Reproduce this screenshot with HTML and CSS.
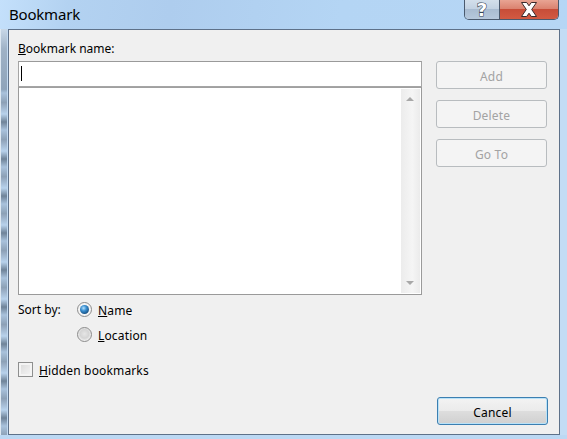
FILE: index.html
```html
<!DOCTYPE html>
<html>
<head>
<meta charset="utf-8">
<title>Bookmark</title>
<link rel="stylesheet" href="styles.css">
</head>
<body>
<div class="window">
  <div class="titlebar">
    <span class="title">Bookmark</span>
    <div class="caption-buttons">
      <div class="cap-btn help"><span class="help-glyph">?</span></div>
      <div class="cap-btn close">
        <svg width="22" height="15" viewBox="0 0 22 15">
          <path d="M3.5 0.5 H8.7 L11 3.8 L13.3 0.5 H18.5 L13.7 7.5 L18.5 14.5 H13.3 L11 11.2 L8.7 14.5 H3.5 L8.3 7.5 Z" fill="#ffffff" stroke="#3a2a2a" stroke-width="1"/>
        </svg>
      </div>
    </div>
  </div>
  <div class="middle">
    <div class="frame-left"></div>
    <div class="client">
      <div class="main">
        <div class="left-col">
          <label class="field-label"><u>B</u>ookmark name:</label>
          <div class="name-input"><span class="caret"></span></div>
          <div class="listbox">
            <div class="list-items"></div>
            <div class="scrollbar">
              <span class="arrow up"></span>
              <span class="arrow down"></span>
            </div>
          </div>
          <div class="sort">
            <span class="sort-label">Sort by:</span>
            <div class="radios">
              <div class="radio-row"><span class="radio checked"><span class="dot"></span></span><span class="opt-text"><u>N</u>ame</span></div>
              <div class="radio-row"><span class="radio"></span><span class="opt-text"><u>L</u>ocation</span></div>
            </div>
          </div>
          <div class="check-row"><span class="checkbox"></span><span class="opt-text"><u>H</u>idden bookmarks</span></div>
        </div>
        <div class="right-col">
          <div class="btn disabled">Add</div>
          <div class="btn disabled">Delete</div>
          <div class="btn disabled">Go To</div>
        </div>
      </div>
      <div class="footer">
        <div class="btn default">Cancel</div>
      </div>
    </div>
    <div class="frame-right"></div>
  </div>
</div>
</body>
</html>
```

FILE: styles.css
```css
html, body {
  margin: 0;
  padding: 0;
}
body {
  width: 567px;
  height: 439px;
  overflow: hidden;
  background: #bcd8f3;
  font-family: "Noto Sans", "Open Sans", "DejaVu Sans", sans-serif;
  font-size: 12px;
  color: #000;
}
.window {
  display: flex;
  flex-direction: column;
  width: 567px;
  height: 439px;
}
.titlebar {
  height: 29px;
  display: flex;
  align-items: flex-start;
  background: linear-gradient(100deg, #c4e0fb 0%, #b3d2f1 12%, #aecdee 30%, #b4d5f4 60%, #b6d6f5 100%);
}
.title {
  font-size: 15px;
  line-height: 15px;
  margin: 7px 0 0 9px;
  color: #000;
  letter-spacing: -0.2px;
}
.caption-buttons {
  margin-left: auto;
  margin-right: 8px;
  display: flex;
  height: 20px;
  border: 1px solid #4a5a6e;
  border-top: none;
  border-radius: 0 0 5px 5px;
  overflow: hidden;
  box-sizing: border-box;
}
.cap-btn {
  height: 19px;
  display: flex;
  align-items: center;
  justify-content: center;
}
.help {
  width: 34px;
  background: linear-gradient(#d3dfeb 0%, #c3d2e2 45%, #a9bcd1 50%, #b6c8dc 100%);
  border-right: 1px solid #4a5a6e;
}
.help-glyph {
  font-family: "DejaVu Sans", sans-serif;
  font-weight: bold;
  font-size: 18px;
  line-height: 18px;
  color: #fff;
  -webkit-text-stroke: 1.2px #3a4656;
  paint-order: stroke fill;
  margin-top: 1px;
}
.close {
  width: 58px;
  background: linear-gradient(#e8a493 0%, #db8370 45%, #c74d38 50%, #d25a42 100%);
}
.middle {
  display: flex;
  height: 406px;
}
.frame-left {
  width: 8px;
  background:
    linear-gradient(90deg, #dde8f2 0, #dde8f2 1px, transparent 1px, transparent 7px, #c2daf2 7px),
    linear-gradient(180deg, #c8d8e8 0px, #9fb2c6 20px, #8fa4ba 60px, transparent 61px),
    repeating-linear-gradient(180deg, #8fa2b8 0px, #b8d2ec 11px, #6f8398 19px, #a9c2dc 27px, #8b9fb4 37px);
}
.client {
  width: 552px;
  box-sizing: border-box;
  border: 1px solid #5e7189;
  background: #f0f0f0;
  padding: 11px 11px 9px 9px;
  display: flex;
  flex-direction: column;
}
.frame-right {
  flex: 1;
  background: #c3dcf4;
}
.main {
  display: flex;
  gap: 14px;
}
.left-col {
  width: 404px;
  display: flex;
  flex-direction: column;
}
.field-label {
  display: block;
  line-height: 16px;
  height: 16px;
  margin-bottom: 4px;
}
.name-input {
  height: 26px;
  box-sizing: border-box;
  border: 1px solid #a5a5a5;
  border-top-color: #9a9a9a;
  background: #fff;
  position: relative;
}
.caret {
  position: absolute;
  left: 2px;
  top: 4px;
  width: 1px;
  height: 15px;
  background: #000;
}
.listbox {
  height: 208px;
  box-sizing: border-box;
  border: 1px solid #9a9a9a;
  border-top-color: #a0a0a0;
  background: #fff;
  display: flex;
}
.list-items {
  flex: 1;
}
.scrollbar {
  width: 19px;
  margin: 1px 1px 1px 0;
  background: linear-gradient(90deg, #ececec, #f2f2f2 40%, #f5f5f5 60%, #ebebeb);
  position: relative;
}
.arrow {
  position: absolute;
  left: 5px;
  width: 0;
  height: 0;
  border-left: 4px solid transparent;
  border-right: 4px solid transparent;
}
.arrow.up {
  top: 8px;
  border-bottom: 4px solid #a8a8a8;
}
.arrow.down {
  bottom: 8px;
  border-top: 4px solid #a8a8a8;
}
.sort {
  display: flex;
  margin-top: 7px;
}
.sort-label {
  width: 59px;
  line-height: 15px;
}
.radios {
  display: flex;
  flex-direction: column;
  gap: 10px;
}
.radio-row {
  display: flex;
  align-items: center;
  gap: 6px;
  height: 15px;
  line-height: 15px;
}
.opt-text {
  padding-top: 2px;
  letter-spacing: 0.15px;
}
.radio {
  width: 15px;
  height: 15px;
  box-sizing: border-box;
  border-radius: 50%;
  border: 1px solid #8b8b8b;
  background: radial-gradient(circle at 50% 45%, #e6e6e6 0%, #d4d4d4 45%, #f4f4f4 75%, #fbfbfb 100%);
  display: flex;
  align-items: center;
  justify-content: center;
}
.radio.checked {
  background: radial-gradient(circle, #f4f4f4 60%, #fcfcfc 100%);
}
.dot {
  width: 9px;
  height: 9px;
  border-radius: 50%;
  background: radial-gradient(circle at 40% 35%, #b6e2ff 0%, #3a8fd0 35%, #13497a 80%, #0c355c 100%);
}
.check-row {
  display: flex;
  align-items: center;
  gap: 6px;
  margin-top: 20px;
  height: 15px;
  line-height: 15px;
}
.checkbox {
  width: 15px;
  height: 15px;
  box-sizing: border-box;
  border: 1px solid #8e8f8f;
  background: linear-gradient(135deg, #d8d8d8 0%, #e8e8e8 50%, #f6f6f6 100%);
  box-shadow: inset 0 0 0 2px #f4f4f4;
}
.right-col {
  width: 111px;
  padding-top: 20px;
  display: flex;
  flex-direction: column;
  gap: 11px;
}
.btn {
  height: 28px;
  box-sizing: border-box;
  border-radius: 3px;
  display: flex;
  align-items: center;
  justify-content: center;
  line-height: 16px;
  padding-top: 3px;
  letter-spacing: 0.2px;
}
.btn.disabled {
  border: 1px solid #b8bcbf;
  background: #f4f4f4;
  color: #a3a3a3;
}
.footer {
  margin-top: auto;
  display: flex;
  justify-content: flex-end;
}
.btn.default {
  width: 111px;
  border: 1px solid #3c7fb1;
  box-shadow: inset 0 0 0 1px #b9e2f8;
  background: linear-gradient(#f3f3f3 0%, #ebebeb 48%, #dddddd 52%, #d0d0d0 100%);
  color: #000;
}
```
